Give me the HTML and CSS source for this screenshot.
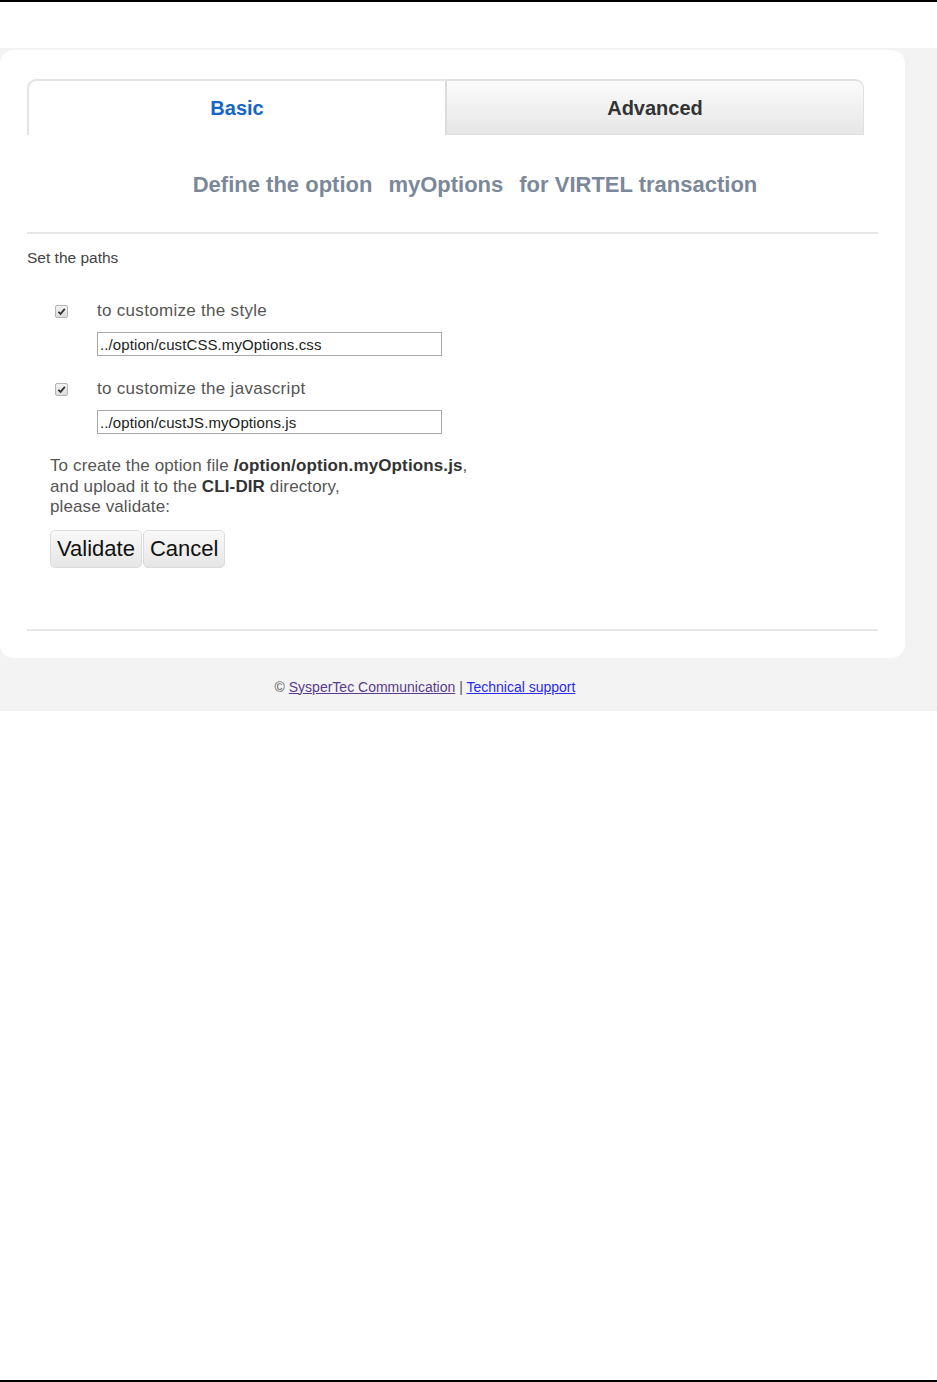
FILE: index.html
```html
<!DOCTYPE html>
<html lang="en">
<head>
    <meta charset="UTF-8">
    <title>VIRTEL option</title>
    <link rel="stylesheet" href="styles.css">
</head>
<body>
    <div class="sheet">
        <div class="band">
            <div class="panel">
                <div class="tabs">
                    <div class="tab active">Basic</div>
                    <div class="tab">Advanced</div>
                </div>

                <h1 class="title"><span>Define the option</span><span>myOptions</span><span>for VIRTEL transaction</span></h1>
                <hr class="rule">

                <p class="lead">Set the paths</p>

                <div class="paths">
                    <div class="path-row">
                        <span class="check"><svg viewBox="0 0 12 12" width="12" height="12"><path d="M2.6 6.3 L5 8.6 L9.6 3.2" fill="none" stroke="#333" stroke-width="1.9"/></svg></span>
                        <label>to customize the style</label>
                    </div>
                    <input class="path-input" type="text" value="../option/custCSS.myOptions.css">

                    <div class="path-row">
                        <span class="check"><svg viewBox="0 0 12 12" width="12" height="12"><path d="M2.6 6.3 L5 8.6 L9.6 3.2" fill="none" stroke="#333" stroke-width="1.9"/></svg></span>
                        <label>to customize the javascript</label>
                    </div>
                    <input class="path-input" type="text" value="../option/custJS.myOptions.js">
                </div>

                <p class="note">To create the option file <b>/option/option.myOptions.js</b>,<br>and upload it to the <b>CLI-DIR</b> directory,<br>please validate:</p>

                <div class="actions">
                    <button>Validate</button><button>Cancel</button>
                </div>

                <hr class="rule bottom">
            </div>

            <div class="footer">&copy; <a class="visited" href="#">SysperTec Communication</a> | <a href="#">Technical support</a></div>
        </div>
    </div>
</body>
</html>
```

FILE: styles.css
```css
html, body { margin: 0; padding: 0; background: #fff; }
body { font-family: "Liberation Sans", Arial, sans-serif; color: #555; }
.sheet { min-height: 1382px; box-sizing: border-box; border-top: 2px solid #000; border-bottom: 2px solid #000; padding-top: 46px; }
.band { background: #f3f3f3; padding: 2px 32px 16px 0; }
.panel { background: #fff; border-radius: 14px; padding: 29px 27px 27px 27px; }

.tabs { display: flex; width: 837px; height: 56px; }
.tab { flex: 1; display: flex; align-items: center; justify-content: center; font-size: 20px; font-weight: bold; color: #333; box-sizing: border-box; }
.tab.active { color: #1565c6; background: #fff; border-top: 2px solid #e4e4e4; border-left: 2px solid #e4e4e4; border-top-left-radius: 9px; }
.tab:not(.active) { background: linear-gradient(#fbfbfb, #e6e6e6); border: 1px solid #e0e0e0; border-top-width: 2px; border-left: 2px solid #dcdcdc; border-top-right-radius: 9px; padding-top: 2px; }

.title { margin: 37px 0 0; font-size: 22px; line-height: 26px; font-weight: bold; color: #7b8899; text-align: center; padding-left: 45px; }
.title span { margin: 0 8px; }

.rule { border: none; height: 2px; background: #e6e6e6; margin: 34px 0 0; }
.rule.bottom { margin-top: 61px; }

.lead { margin: 15px 0 0; font-size: 15.5px; line-height: 17px; color: #444; }

.paths { padding-left: 70px; margin-top: 35px; }
.path-row { position: relative; display: flex; align-items: center; height: 20px; }
.path-row label { font-size: 17px; line-height: 20px; letter-spacing: 0.3px; color: #555; }
.check { position: absolute; left: -42px; top: 4px; width: 11px; height: 11px; border: 1px solid #b5b5b5; border-radius: 2px; background: linear-gradient(#f2f2f2, #dcdcdc); display: flex; align-items: center; justify-content: center; }
.check svg { width: 11px; height: 11px; }
.path-input { display: block; box-sizing: border-box; width: 345px; height: 24px; margin: 11px 0 23px; padding: 0 2px; border: 1px solid #a9a9a9; font-family: "Liberation Sans", Arial, sans-serif; font-size: 15px; letter-spacing: 0.1px; color: #222; background: #fff; }
.paths .path-input:last-child { margin-bottom: 0; }

.note { margin: 22px 0 0 23px; font-size: 17px; line-height: 20.5px; letter-spacing: 0.12px; color: #555; }
.note b { color: #333; }

.actions { display: flex; gap: 1px; margin: 12px 0 0 23px; }
.actions button { font-family: "Liberation Sans", Arial, sans-serif; font-size: 22px; line-height: 26px; height: 38px; padding: 0 6px; color: #111; background: linear-gradient(#f9f9f9, #e6e6e6); border: 1px solid #dcdcdc; border-radius: 5px; }

.footer { text-align: center; font-size: 14px; line-height: 16px; color: #555; margin-top: 21px; padding-right: 55px; }
.footer a { color: #2b2bee; }
.footer a.visited { color: #5b3b8c; }
```
